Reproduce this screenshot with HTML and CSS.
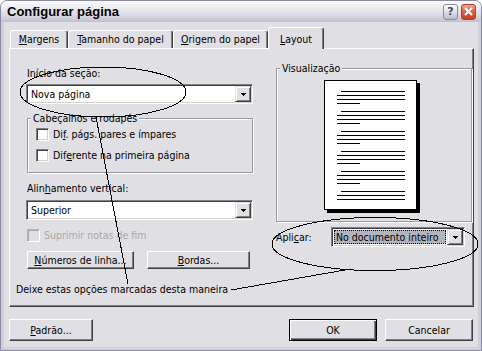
FILE: index.html
```html
<!DOCTYPE html>
<html lang="pt-BR">
  <head>
    <meta charset="UTF-8" />
    <title>Configurar página</title>
    <link rel="stylesheet" href="styles.css">
  </head>
  <body>
    <div class="window">
      <div class="titlebar">
        <span class="title">Configurar página</span>
        <div class="caption">
          <span class="cbtn help">?</span>
          <span class="cbtn close">
            <svg width="9" height="9" viewBox="0 0 9 9"><path d="M1 1l7 7M8 1L1 8" stroke="#fff" stroke-width="2" fill="none"/></svg>
          </span>
        </div>
      </div>

      <div class="client">
        <div class="tabs">
          <div class="tab tab-margens"><u>M</u>argens</div>
          <div class="tab tab-tamanho"><u>T</u>amanho do papel</div>
          <div class="tab tab-origem"><u>O</u>rigem do papel</div>
          <div class="tab tab-layout active"><u>L</u>ayout</div>
        </div>

        <div class="panel">
          <div class="cols">
            <div class="col-left">
              <div class="label">Início da seção:</div>
              <div class="combo">
                <span class="value">Nova página</span>
                <span class="arrow"><svg width="5" height="3"><path d="M0 0h5v1H0zM1 1h3v1H1zM2 2h1v1H2z"/></svg></span>
              </div>

              <fieldset class="group">
                <legend>Cabeçalhos e rodapés</legend>
                <div class="check"><span class="box"></span><span>Di<u>f</u>. págs. pares e ímpares</span></div>
                <div class="check"><span class="box"></span><span>Dif<u>e</u>rente na primeira página</span></div>
              </fieldset>

              <div class="label label-gap">Alin<u>h</u>amento vertical:</div>
              <div class="combo combo-tight">
                <span class="value">Superior</span>
                <span class="arrow"><svg width="5" height="3"><path d="M0 0h5v1H0zM1 1h3v1H1zM2 2h1v1H2z"/></svg></span>
              </div>

              <div class="check disabled"><span class="box"></span><span>Suprimir notas de fim</span></div>

              <div class="btn-row">
                <button class="btn btn-lines"><u>N</u>úmeros de linha...</button>
                <button class="btn btn-borders"><u>B</u>ordas...</button>
              </div>
            </div>

            <div class="col-right">
              <fieldset class="group preview">
                <legend>Visualização</legend>
                <div class="page">
                  <svg width="91" height="128" viewBox="0 0 91 128">
                    <g fill="#000">
                      <rect x="16" y="10" width="64" height="1"/><rect x="12" y="14" width="68" height="1"/><rect x="12" y="18" width="68" height="1"/><rect x="12" y="22" width="23" height="1"/>
                      <rect x="16" y="30" width="64" height="1"/><rect x="12" y="34" width="68" height="1"/><rect x="12" y="38" width="68" height="1"/><rect x="12" y="42" width="23" height="1"/>
                      <rect x="16" y="50" width="64" height="1"/><rect x="12" y="54" width="68" height="1"/><rect x="12" y="58" width="68" height="1"/><rect x="12" y="62" width="23" height="1"/>
                      <rect x="16" y="70" width="64" height="1"/><rect x="12" y="74" width="68" height="1"/><rect x="12" y="78" width="68" height="1"/><rect x="12" y="82" width="23" height="1"/>
                      <rect x="16" y="90" width="64" height="1"/><rect x="12" y="94" width="68" height="1"/><rect x="12" y="98" width="68" height="1"/><rect x="12" y="102" width="23" height="1"/>
                      <rect x="16" y="110" width="64" height="1"/><rect x="12" y="114" width="68" height="1"/><rect x="12" y="118" width="68" height="1"/>
                    </g>
                  </svg>
                </div>
              </fieldset>

              <div class="apply-row">
                <span class="apply-label">Apli<u>c</u>ar:</span>
                <div class="combo combo-apply">
                  <span class="value selected">No documento inteiro</span>
                  <span class="arrow"><svg width="5" height="3"><path d="M0 0h5v1H0zM1 1h3v1H1zM2 2h1v1H2z"/></svg></span>
                </div>
              </div>
            </div>
          </div>

          <div class="note">Deixe estas opções marcadas desta maneira</div>
        </div>

        <div class="footer">
          <button class="btn btn-default-set"><u>P</u>adrão...</button>
          <span class="spacer"></span>
          <button class="btn btn-ok">OK</button>
          <button class="btn btn-cancel">Cancelar</button>
        </div>
      </div>

      <!-- marcações feitas à mão por cima do print -->
      <svg class="annot" width="482" height="351" viewBox="0 0 482 351">
        <g fill="none" stroke="#000" stroke-width="1" shape-rendering="crispEdges">
          <ellipse cx="103" cy="92" rx="83" ry="25"/>
          <line x1="96" y1="117" x2="128" y2="284"/>
          <ellipse cx="375" cy="244" rx="103" ry="26.5"/>
          <line x1="231" y1="290" x2="345" y2="270"/>
        </g>
      </svg>
    </div>
  </body>
</html>
```

FILE: styles.css
```css
* {
  box-sizing: border-box;
}
body {
  margin: 0;
  background: #fff;
  font-family: "DejaVu Sans Condensed", "DejaVu Sans", sans-serif;
  font-stretch: condensed;
  font-size: 10.5px;
  color: #000;
}
u {
  text-decoration: underline;
}

/* janela */
.window {
  position: relative;
  width: 482px;
  height: 351px;
  border: 1px solid #8a8aa0;
  border-radius: 7px 7px 0 0;
  background: #d0d0da;
  padding: 0 3px 3px;
  display: flex;
  flex-direction: column;
}
.titlebar {
  height: 21px;
  margin: 0 -3px;
  padding: 0 5px 0 6px;
  display: flex;
  align-items: center;
  border-radius: 6px 6px 0 0;
  background: linear-gradient(to bottom, #fdfdfe 0%, #ececf2 30%, #d9d9e3 70%, #bfbfcf 100%);
}
.title {
  flex: 1;
  font: bold 13px "Liberation Sans", sans-serif;
  color: #000;
}
.caption {
  display: flex;
  gap: 3px;
}
.cbtn {
  width: 15px;
  height: 16px;
  border-radius: 3px;
  display: flex;
  align-items: center;
  justify-content: center;
}
.help {
  border: 1px solid #8b8ca4;
  background: linear-gradient(to bottom, #ffffff, #dcdce8 55%, #b9bacc);
  color: #45465f;
  font: bold 11px "DejaVu Sans", sans-serif;
}
.close {
  border: 1px solid #a8432f;
  background: linear-gradient(to bottom, #f3a48c, #e2603f 45%, #c63d22);
}

.client {
  flex: 1;
  background: #e0dfe3;
  padding: 5px 4px 6px 5px;
  display: flex;
  flex-direction: column;
}

/* abas */
.tabs {
  display: flex;
  align-items: flex-end;
  height: 21px;
  padding-left: 1px;
  position: relative;
  z-index: 1;
}
.tab {
  height: 18px;
  border: 1px solid;
  border-bottom: none;
  border-color: #fff #404040 #404040 #fff;
  border-radius: 3px 3px 0 0;
  box-shadow: inset -1px 0 #808080;
  background: #e0dfe3;
  text-align: center;
  line-height: 16px;
  white-space: nowrap;
}
.tab-margens { width: 58px; }
.tab-tamanho { width: 105px; }
.tab-origem { width: 95px; }
.tab-layout { width: 56px; }
.tab.active {
  height: 22px;
  margin-bottom: -1px;
  padding-top: 3px;
}

.panel {
  flex: 1;
  border: 1px solid;
  border-color: #fff #404040 #404040 #fff;
  box-shadow: inset -1px -1px #808080;
  padding-top: 13px;
}
.cols {
  display: grid;
  grid-template-columns: 227px 196px;
  column-gap: 23px;
  padding-left: 16px;
  align-items: start;
}
.col-left {
  margin-top: 5px;
}
.label {
  line-height: 13px;
  padding-left: 1px;
}
.label-gap {
  margin-top: 9px;
}

/* combos */
.combo {
  display: flex;
  height: 20px;
  margin-top: 4px;
  border: 1px solid;
  border-color: #808080 #fff #fff #808080;
  box-shadow: inset 1px 1px #404040, inset -1px -1px #d4d0c8;
  background: #fff;
  padding: 1px;
}
.combo-tight {
  margin-top: 5px;
}
.combo .value {
  flex: 1;
  line-height: 16px;
  padding-left: 3px;
  white-space: nowrap;
}
.combo .value.selected {
  background: #b2b4bf;
  outline: 1px dotted #000;
  outline-offset: -1px;
  margin: 1px;
  line-height: 14px;
  padding-left: 2px;
}
.arrow {
  width: 16px;
  height: 16px;
  border: 1px solid;
  border-color: #e0dfe3 #404040 #404040 #e0dfe3;
  box-shadow: inset 1px 1px #fff, inset -1px -1px #808080;
  background: #e0dfe3;
  display: flex;
  align-items: center;
  justify-content: center;
}
.arrow svg {
  display: block;
  margin-top: 1px;
}

/* grupos */
fieldset.group {
  margin: 8px 0 0 1px;
  padding: 3px 0 10px 0;
  min-width: 0;
  border: 1px solid #9c9ba3;
  box-shadow: inset 1px 1px #fff, 1px 1px #fff;
}
fieldset.group legend {
  margin-left: 3px;
  padding: 0 2px;
  line-height: 13px;
  background: #e0dfe3;
}
.check {
  display: flex;
  align-items: center;
  gap: 4px;
  height: 13px;
  line-height: 13px;
  white-space: nowrap;
}
.group .check {
  padding-left: 8px;
}
.group .check + .check {
  margin-top: 8px;
}
.box {
  width: 13px;
  height: 13px;
  flex: none;
  border: 1px solid;
  border-color: #808080 #fff #fff #808080;
  box-shadow: inset 1px 1px #404040, inset -1px -1px #d4d0c8;
  background: #fff;
}
.check.disabled {
  margin-top: 9px;
  padding-left: 1px;
  color: #a9a8ae;
}
.check.disabled .box {
  background: #e0dfe3;
  border-color: #b4b3b8 #fff #fff #b4b3b8;
  box-shadow: inset 1px 1px #a9a8ae;
}

/* botões */
.btn {
  height: 18px;
  padding: 0;
  border: 1px solid;
  border-color: #fff #404040 #404040 #fff;
  box-shadow: inset -1px -1px #808080;
  background: #e0dfe3;
  font: inherit;
  color: #000;
  line-height: 14px;
  white-space: nowrap;
}
.btn-row {
  display: flex;
  margin-top: 9px;
}
.btn-lines {
  width: 107px;
  margin-left: 1px;
}
.btn-borders {
  width: 103px;
  margin-left: 13px;
}

/* visualização */
fieldset.preview {
  margin: 0;
  padding: 5px 0 11px 0;
}
.page {
  width: 93px;
  height: 130px;
  margin-left: 47px;
  border: 1px solid #000;
  background: #fff;
  box-shadow: 3px 3px 0 #000;
}
.page svg {
  display: block;
}
.apply-row {
  display: flex;
  align-items: center;
  margin-top: 5px;
}
.apply-label {
  width: 55px;
}
.combo-apply {
  width: 134px;
  margin-top: 0;
}

.note {
  margin-top: 14px;
  padding-left: 6px;
  line-height: 13px;
}

.footer {
  display: flex;
  gap: 8px;
  margin-top: 12px;
  padding-right: 1px;
}
.footer .btn {
  height: 22px;
  line-height: 18px;
}
.spacer {
  flex: 1;
}
.btn-default-set {
  width: 84px;
}
.btn-ok,
.btn-cancel {
  width: 88px;
}
.btn-ok {
  border: 1px solid #000;
  box-shadow: inset 1px 1px #fff, inset -1px -1px #404040, inset -2px -2px #808080;
}

.annot {
  position: absolute;
  left: -1px;
  top: -1px;
  pointer-events: none;
  overflow: visible;
}
```
